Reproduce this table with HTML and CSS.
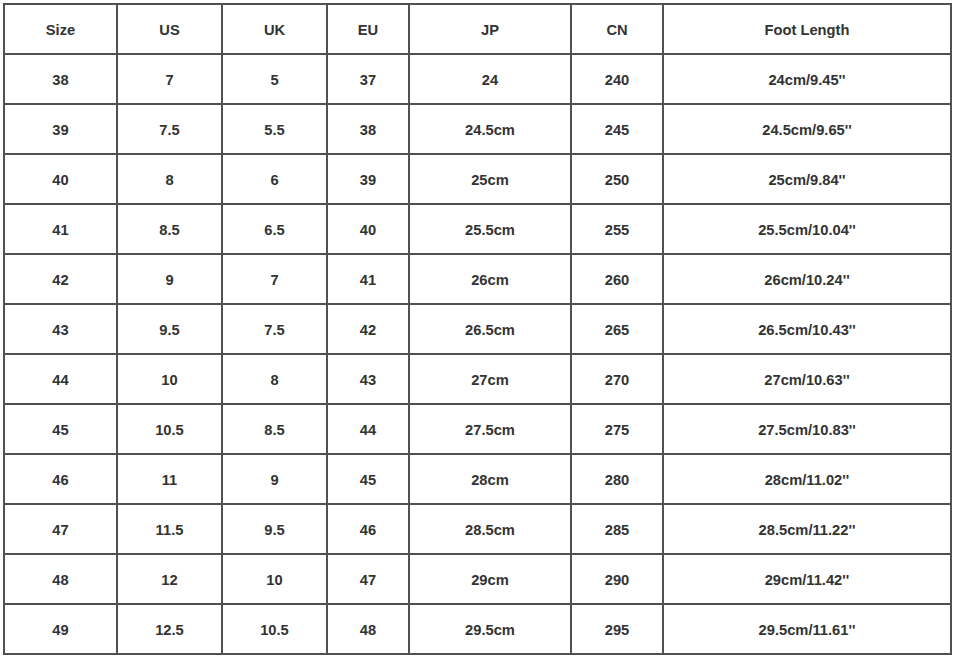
FILE: index.html
```html
<!DOCTYPE html>
<html lang="en">
<head>
<meta charset="utf-8">
<title>Size Chart</title>
<link rel="stylesheet" href="styles.css">
</head>
<body>
<table class="chart">
  <colgroup>
    <col class="c-size">
    <col class="c-us">
    <col class="c-uk">
    <col class="c-eu">
    <col class="c-jp">
    <col class="c-cn">
    <col class="c-foot">
  </colgroup>
  <thead>
    <tr><th>Size</th><th>US</th><th>UK</th><th>EU</th><th>JP</th><th>CN</th><th>Foot Length</th></tr>
  </thead>
  <tbody>
    <tr><td>38</td><td>7</td><td>5</td><td>37</td><td>24</td><td>240</td><td>24cm/9.45''</td></tr>
    <tr><td>39</td><td>7.5</td><td>5.5</td><td>38</td><td>24.5cm</td><td>245</td><td>24.5cm/9.65''</td></tr>
    <tr><td>40</td><td>8</td><td>6</td><td>39</td><td>25cm</td><td>250</td><td>25cm/9.84''</td></tr>
    <tr><td>41</td><td>8.5</td><td>6.5</td><td>40</td><td>25.5cm</td><td>255</td><td>25.5cm/10.04''</td></tr>
    <tr><td>42</td><td>9</td><td>7</td><td>41</td><td>26cm</td><td>260</td><td>26cm/10.24''</td></tr>
    <tr><td>43</td><td>9.5</td><td>7.5</td><td>42</td><td>26.5cm</td><td>265</td><td>26.5cm/10.43''</td></tr>
    <tr><td>44</td><td>10</td><td>8</td><td>43</td><td>27cm</td><td>270</td><td>27cm/10.63''</td></tr>
    <tr><td>45</td><td>10.5</td><td>8.5</td><td>44</td><td>27.5cm</td><td>275</td><td>27.5cm/10.83''</td></tr>
    <tr><td>46</td><td>11</td><td>9</td><td>45</td><td>28cm</td><td>280</td><td>28cm/11.02''</td></tr>
    <tr><td>47</td><td>11.5</td><td>9.5</td><td>46</td><td>28.5cm</td><td>285</td><td>28.5cm/11.22''</td></tr>
    <tr><td>48</td><td>12</td><td>10</td><td>47</td><td>29cm</td><td>290</td><td>29cm/11.42''</td></tr>
    <tr><td>49</td><td>12.5</td><td>10.5</td><td>48</td><td>29.5cm</td><td>295</td><td>29.5cm/11.61''</td></tr>
  </tbody>
</table>
</body>
</html>
```
FILE: styles.css
```css
html, body {
  margin: 0;
  padding: 0;
  background: #ffffff;
}
body {
  padding: 3px 0 0 3px;
  font-family: "Liberation Sans", Arial, sans-serif;
}
.chart {
  border-collapse: collapse;
  table-layout: fixed;
  width: 949px;
}
.c-size { width: 113px; }
.c-us { width: 105px; }
.c-uk { width: 105px; }
.c-eu { width: 82px; }
.c-jp { width: 162px; }
.c-cn { width: 92px; }
.c-foot { width: 288px; }
.chart th,
.chart td {
  border: 2px solid #505050;
  height: 47px;
  padding: 1px 0 0 0;
  text-align: center;
  vertical-align: middle;
  font-size: 14.7px;
  font-weight: bold;
  color: #333333;
}
```
